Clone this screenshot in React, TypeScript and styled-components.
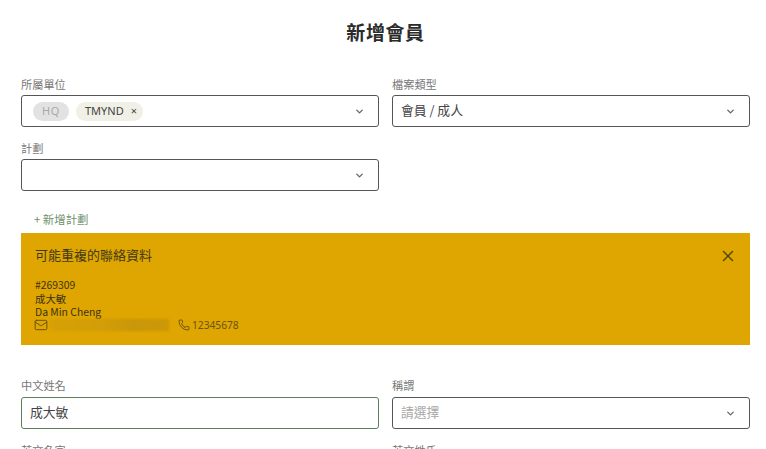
import React from 'react';
import styled, { createGlobalStyle } from 'styled-components';
import { ChevronDown, Mail, Phone, X } from 'lucide-react';

const GlobalStyle = createGlobalStyle`
  html, body {
    margin: 0;
    height: 100%;
    overflow: hidden;
    background: #fff;
  }
  body {
    font-family: "Noto Sans CJK TC", "Noto Sans", sans-serif;
    color: #333;
  }
`;

const Page = styled.div`
  width: 766px;
  height: 449px;
  overflow: hidden;
  box-sizing: border-box;
  padding: 0 16px 0 21px;
`;

const Title = styled.h1`
  margin: 0;
  height: 75px;
  padding-top: 18px;
  box-sizing: border-box;
  text-align: center;
  font-size: 19px;
  line-height: 28px;
  font-weight: 700;
  letter-spacing: 0.6px;
  color: #2b2b2b;
`;

const Grid = styled.div`
  display: grid;
  grid-template-columns: 358px 358px;
  column-gap: 13px;
  row-gap: 12px;
`;

const Field = styled.div`
  display: flex;
  flex-direction: column;
  min-width: 0;
`;

const Label = styled.label<{ $tall?: boolean }>`
  height: ${p => (p.$tall ? '21px' : '20px')};
  font-size: 11.2px;
  line-height: 18px;
  color: #777;
`;

const Box = styled.div<{ $focus?: boolean }>`
  height: 32px;
  box-sizing: border-box;
  border: 1px solid ${p => (p.$focus ? '#5b7f58' : '#555')};
  border-radius: 3px;
  display: flex;
  align-items: center;
  padding: 0 13px 0 8px;
  background: #fff;
`;

const Value = styled.span<{ $muted?: boolean }>`
  flex: 1;
  font-size: 12.8px;
  line-height: 18px;
  padding-bottom: 2px;
  color: ${p => (p.$muted ? '#a8a8a8' : '#444')};
`;

const Chips = styled.div`
  flex: 1;
  display: flex;
  gap: 7px;
  padding-left: 3px;
`;

const Chip = styled.span<{ $disabled?: boolean }>`
  display: inline-flex;
  align-items: center;
  height: 19px;
  box-sizing: border-box;
  border-radius: 10px;
  font-family: "Noto Sans", sans-serif;
  font-size: 11px;
  padding: ${p => (p.$disabled ? '0 9px 1px' : '0 6px 1px 9px')};
  gap: 7px;
  letter-spacing: ${p => (p.$disabled ? '0.6px' : '0')};
  background: ${p => (p.$disabled ? '#e2e2e2' : '#f0f0e6')};
  color: ${p => (p.$disabled ? '#a8a8a8' : '#444')};
`;

const Chevron = styled(ChevronDown)`
  width: 11px;
  height: 11px;
  stroke-width: 3;
  color: #666;
  flex: none;
`;

const AddLink = styled.a`
  display: block;
  height: 22px;
  margin-top: 18px;
  padding-left: 13px;
  font-size: 11.4px;
  line-height: 20px;
  color: #6f8f6c;
`;

const Alert = styled.div`
  width: 729px;
  height: 112px;
  box-sizing: border-box;
  margin-top: 2px;
  margin-bottom: 31px;
  padding: 12px 14px;
  background: #dfa500;
  color: #333;
`;

const AlertHead = styled.div`
  display: flex;
  align-items: center;
  justify-content: space-between;
  height: 22px;
  font-size: 13px;
  line-height: 20px;
  margin-bottom: 11px;
  color: #443a18;
`;

const HeadText = styled.span`
  padding-bottom: 2px;
`;

const Close = styled(X)`
  width: 18px;
  height: 18px;
  margin-right: -1px;
  color: #5a4a10;
`;

const Line = styled.div`
  font-size: 10.4px;
  line-height: 13.5px;
  color: #3a3213;
`;

const ContactRow = styled.div`
  display: flex;
  align-items: center;
  height: 13px;
  font-family: "Noto Sans", sans-serif;
  font-size: 10.2px;
  color: #6b5413;
`;

const Blurred = styled.span`
  width: 119px;
  height: 12px;
  margin: 0 9px 0 2px;
  background: linear-gradient(90deg, #d6a006, #d29d08 45%, #c99709 70%, #cc9808);
  filter: blur(1px);
`;

const MailIcon = styled(Mail)`
  width: 14px;
  height: 14px;
  margin-left: -1px;
  stroke-width: 1.5;
  color: #5a4a10;
`;

const PhoneIcon = styled(Phone)`
  width: 12px;
  height: 12px;
  stroke-width: 1.7;
  margin-right: 2px;
  color: #5a4a10;
`;

const App: React.FC = () => {
  return (
    <>
      <GlobalStyle />
      <Page>
        <Title>新增會員</Title>
        <Grid>
          <Field>
            <Label>所屬單位</Label>
            <Box>
              <Chips>
                <Chip $disabled>HQ</Chip>
                <Chip>
                  TMYND <span>×</span>
                </Chip>
              </Chips>
              <Chevron />
            </Box>
          </Field>
          <Field>
            <Label>檔案類型</Label>
            <Box>
              <Value>會員 / 成人</Value>
              <Chevron />
            </Box>
          </Field>
          <Field>
            <Label>計劃</Label>
            <Box>
              <Value />
              <Chevron />
            </Box>
          </Field>
        </Grid>
        <AddLink>+ 新增計劃</AddLink>
        <Alert>
          <AlertHead>
            <HeadText>可能重複的聯絡資料</HeadText>
            <Close />
          </AlertHead>
          <Line>#269309</Line>
          <Line>成大敏</Line>
          <Line>Da Min Cheng</Line>
          <ContactRow>
            <MailIcon />
            <Blurred />
            <PhoneIcon />
            12345678
          </ContactRow>
        </Alert>
        <Grid>
          <Field>
            <Label $tall>中文姓名</Label>
            <Box $focus>
              <Value>成大敏</Value>
            </Box>
          </Field>
          <Field>
            <Label $tall>稱謂</Label>
            <Box>
              <Value $muted>請選擇</Value>
              <Chevron />
            </Box>
          </Field>
          <Field>
            <Label>英文名字</Label>
          </Field>
          <Field>
            <Label>英文姓氏</Label>
          </Field>
        </Grid>
      </Page>
    </>
  );
};

export default App;
